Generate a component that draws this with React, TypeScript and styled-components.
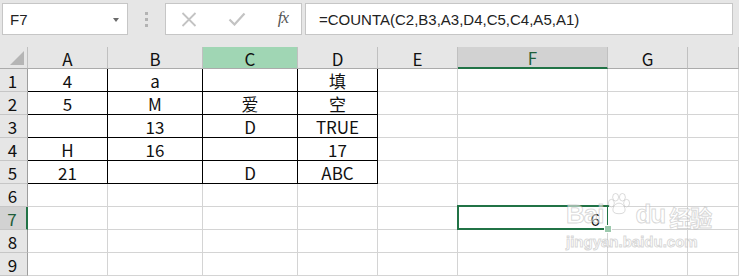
import React from "react";
import styled, { createGlobalStyle } from "styled-components";

const GlobalStyle = createGlobalStyle`
  html, body {
    margin: 0;
    padding: 0;
    background: #ffffff;
  }
  * {
    box-sizing: border-box;
  }
`;

const UI_FONT = `"Liberation Sans", "Noto Sans CJK SC", sans-serif`;
const CELL_FONT = `"Noto Sans CJK SC", "Liberation Sans", sans-serif`;

const Window = styled.div`
  width: 739px;
  height: 276px;
  overflow: hidden;
  background: #e6e6e6;
  position: relative;
`;

const FormulaBar = styled.div`
  height: 47px;
  display: flex;
  align-items: flex-start;
  padding: 3px 6px 0 2px;
  font-family: ${UI_FONT};
`;

const NameBox = styled.div`
  width: 126px;
  height: 32px;
  background: #fff;
  border: 1px solid #c6c6c6;
  display: flex;
  align-items: center;
  justify-content: space-between;
  padding: 0 8px 0 7px;
  font-size: 15px;
  color: #222;
`;

const DropArrow = styled.span`
  width: 0;
  height: 0;
  border-left: 3.5px solid transparent;
  border-right: 3.5px solid transparent;
  border-top: 4px solid #6a6a6a;
  margin-top: 1px;
`;

const Grip = styled.div`
  width: 37px;
  height: 32px;
  display: flex;
  flex-direction: column;
  align-items: center;
  justify-content: center;
  gap: 3px;
  span {
    width: 3px;
    height: 3px;
    background: #b3b3b3;
  }
`;

const ButtonBox = styled.div`
  width: 137px;
  height: 32px;
  background: #fff;
  border: 1px solid #c6c6c6;
  display: flex;
  align-items: center;
  justify-content: space-between;
  padding: 0 13px 0 15px;
  margin-right: 3px;
`;

const Fx = styled.span`
  font-family: "Liberation Serif", "DejaVu Serif", serif;
  font-style: italic;
  font-size: 17px;
  color: #555;
  letter-spacing: -1px;
  margin-bottom: 2px;
`;

const FormulaInput = styled.div`
  flex: 1;
  height: 32px;
  background: #fff;
  border: 1px solid #c6c6c6;
  display: flex;
  align-items: center;
  padding-left: 13px;
  font-size: 15px;
  color: #222;
`;

const Sheet = styled.div`
  display: grid;
  grid-template-columns: 28px 80px 95px 95px 80px 80px 150px 80px 51px;
  grid-template-rows: 22px repeat(9, 23px);
  font-family: ${CELL_FONT};
  font-size: 17px;
  color: #111;
`;

const Corner = styled.div`
  background: #e6e6e6;
  border-right: 1px solid #c0c0c0;
  border-bottom: 1px solid #ababab;
  display: flex;
  align-items: flex-end;
  justify-content: flex-end;
  padding: 0 3px 3px 0;
`;

const ColHead = styled.div<{ $state?: "active" | "selected" }>`
  background: ${(p) =>
    p.$state === "active" ? "#a0d6b4" : p.$state === "selected" ? "#d2d2d2" : "#e6e6e6"};
  border-right: 1px solid #c0c0c0;
  border-bottom: ${(p) => (p.$state === "selected" ? "2px solid #217346" : "1px solid #ababab")};
  display: flex;
  align-items: center;
  justify-content: center;
  line-height: 1;
  padding-top: 1px;
  color: ${(p) => (p.$state === "selected" ? "#1f5e3a" : "#111")};
`;

const RowHead = styled.div<{ $selected?: boolean }>`
  background: ${(p) => (p.$selected ? "#d2d2d2" : "#e6e6e6")};
  border-right: ${(p) => (p.$selected ? "2px solid #217346" : "1px solid #9e9e9e")};
  border-bottom: 1px solid #c6c6c6;
  display: flex;
  align-items: center;
  justify-content: center;
  padding-right: 2px;
  line-height: 1;
  color: ${(p) => (p.$selected ? "#1f5e3a" : "#111")};
`;

const Cell = styled.div<{ $boxed?: boolean; $right?: boolean; $selected?: boolean }>`
  position: relative;
  background: #fff;
  border-right: 1px solid ${(p) => (p.$boxed ? "#000" : "#d4d4d4")};
  border-bottom: 1px solid ${(p) => (p.$boxed ? "#000" : "#d4d4d4")};
  display: flex;
  align-items: center;
  justify-content: ${(p) => (p.$right ? "flex-end" : "center")};
  padding: 0 ${(p) => (p.$right ? "7px" : "0")} 0 0;
  line-height: 1;
  white-space: nowrap;

  ${(p) =>
    p.$selected &&
    `
    &::after {
      content: "";
      position: absolute;
      top: -2px;
      left: -1px;
      right: -2px;
      bottom: -1px;
      border: 2px solid #217346;
      pointer-events: none;
    }
    &::before {
      content: "";
      position: absolute;
      right: -5px;
      bottom: -4px;
      width: 6px;
      height: 6px;
      background: #9cc9ad;
      border: 1px solid #fff;
      z-index: 2;
    }
  `}
`;

const Watermark = styled.div`
  position: absolute;
  left: 566px;
  top: 193px;
  white-space: nowrap;
  pointer-events: none;
  color: rgba(255, 255, 255, 0.55);
  -webkit-text-stroke: 1px rgba(170, 170, 170, 0.45);
  font-family: "Liberation Sans", "Noto Sans CJK SC", sans-serif;
  font-weight: bold;
`;

const MarkTop = styled.div`
  display: flex;
  align-items: flex-end;
  gap: 1px;
  font-size: 26px;
  line-height: 1;
  letter-spacing: -1px;
`;

const MarkCjk = styled.span`
  font-size: 22px;
  margin-left: 3px;
  font-family: "Noto Sans CJK SC", sans-serif;
`;

const MarkSite = styled.div`
  font-size: 15px;
  margin-top: 6px;
  letter-spacing: 0;
`;

const columns = ["A", "B", "C", "D", "E", "F", "G", ""];

const data: string[][] = [
  ["4", "a", "", "填"],
  ["5", "M", "爱", "空"],
  ["", "13", "D", "TRUE"],
  ["H", "16", "", "17"],
  ["21", "", "D", "ABC"],
];

const Paw = () => (
  <svg width="30" height="22" viewBox="0 0 30 26" style={{ marginBottom: 12 }}>
    <g fill="rgba(255,255,255,0.55)" stroke="rgba(170,170,170,0.5)" strokeWidth="1">
      <ellipse cx="6" cy="12" rx="3.5" ry="4.5" />
      <ellipse cx="11" cy="5" rx="3.5" ry="4.5" />
      <ellipse cx="19" cy="5" rx="3.5" ry="4.5" />
      <ellipse cx="24" cy="12" rx="3.5" ry="4.5" />
      <path d="M15 12 C9 12 6 20 9 23 C11 25 19 25 21 23 C24 20 21 12 15 12 Z" />
    </g>
  </svg>
);

export default function App() {
  return (
    <>
      <GlobalStyle />
      <Window>
        <FormulaBar>
          <NameBox>
            <span>F7</span>
            <DropArrow />
          </NameBox>
          <Grip>
            <span />
            <span />
            <span />
          </Grip>
          <ButtonBox>
            <svg width="16" height="15" viewBox="0 0 16 15">
              <path d="M1.5 1 L14.5 14 M14.5 1 L1.5 14" stroke="#c3c3c3" strokeWidth="1.8" fill="none" />
            </svg>
            <svg width="18" height="14" viewBox="0 0 18 14">
              <path d="M1.5 7.5 L6.5 12.5 L16.5 1.5" stroke="#c3c3c3" strokeWidth="2.2" fill="none" />
            </svg>
            <Fx>fx</Fx>
          </ButtonBox>
          <FormulaInput>=COUNTA(C2,B3,A3,D4,C5,C4,A5,A1)</FormulaInput>
        </FormulaBar>

        <Sheet>
          <Corner>
            <svg width="14" height="14" viewBox="0 0 14 14">
              <path d="M14 0 L14 14 L0 14 Z" fill="#b5b5b5" />
            </svg>
          </Corner>
          {columns.map((c, i) => (
            <ColHead key={i} $state={c === "C" ? "active" : c === "F" ? "selected" : undefined}>
              {c}
            </ColHead>
          ))}

          {Array.from({ length: 9 }, (_, r) => {
            const rowNo = r + 1;
            return (
              <React.Fragment key={rowNo}>
                <RowHead $selected={rowNo === 7}>{rowNo}</RowHead>
                {columns.map((_, ci) => {
                  const boxed = rowNo <= 5 && ci < 4;
                  const value = boxed ? data[r][ci] : "";
                  if (rowNo === 7 && ci === 5) {
                    return (
                      <Cell key={ci} $right $selected>
                        6
                      </Cell>
                    );
                  }
                  return (
                    <Cell key={ci} $boxed={boxed}>
                      {value}
                    </Cell>
                  );
                })}
              </React.Fragment>
            );
          })}
        </Sheet>

        <Watermark>
          <MarkTop>
            <span>Bai</span>
            <Paw />
            <span>du</span>
            <MarkCjk>经验</MarkCjk>
          </MarkTop>
          <MarkSite>jingyan.baidu.com</MarkSite>
        </Watermark>
      </Window>
    </>
  );
}
